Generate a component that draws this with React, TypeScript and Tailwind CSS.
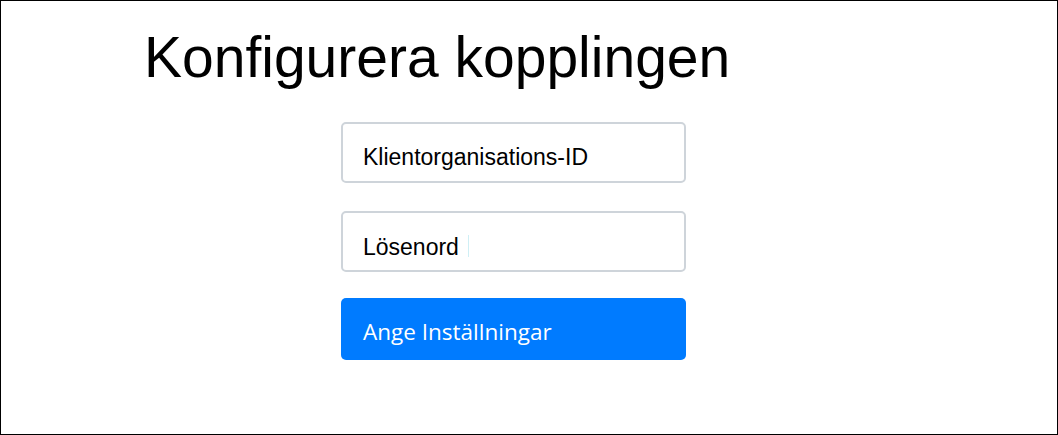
export default function App() {
  return (
    <div className="w-[1058px] h-[435px] border border-black bg-white overflow-hidden font-['Liberation_Sans',Arial,sans-serif] text-black">
      <h1 className="mt-[28px] pl-[143px] text-[57px] leading-none font-normal">
        Konfigurera kopplingen
      </h1>

      <div className="ml-[340px] mt-[36px] w-[345px] flex flex-col">
        <div className="h-[61px] border-2 border-[#ced4da] rounded-[5px] pl-[20px] pt-[22px] text-[23px] leading-none">
          Klientorganisations-ID
        </div>

        <div className="mt-[28px] h-[61px] border-2 border-[#ced4da] rounded-[5px] pl-[20px] pt-[23px] text-[23px] leading-none flex items-start">
          <span>Lösenord</span>
          <span className="ml-[9px] mt-[-1px] w-px h-[22px] bg-[#cfeff5]" />
        </div>

        <button className="mt-[26px] h-[62px] w-full rounded-[5px] bg-[#007bff] text-white text-left pl-[22px] pt-[7px] text-[22.5px] leading-none font-['Open_Sans',sans-serif]">
          Ange Inställningar
        </button>
      </div>
    </div>
  )
}
